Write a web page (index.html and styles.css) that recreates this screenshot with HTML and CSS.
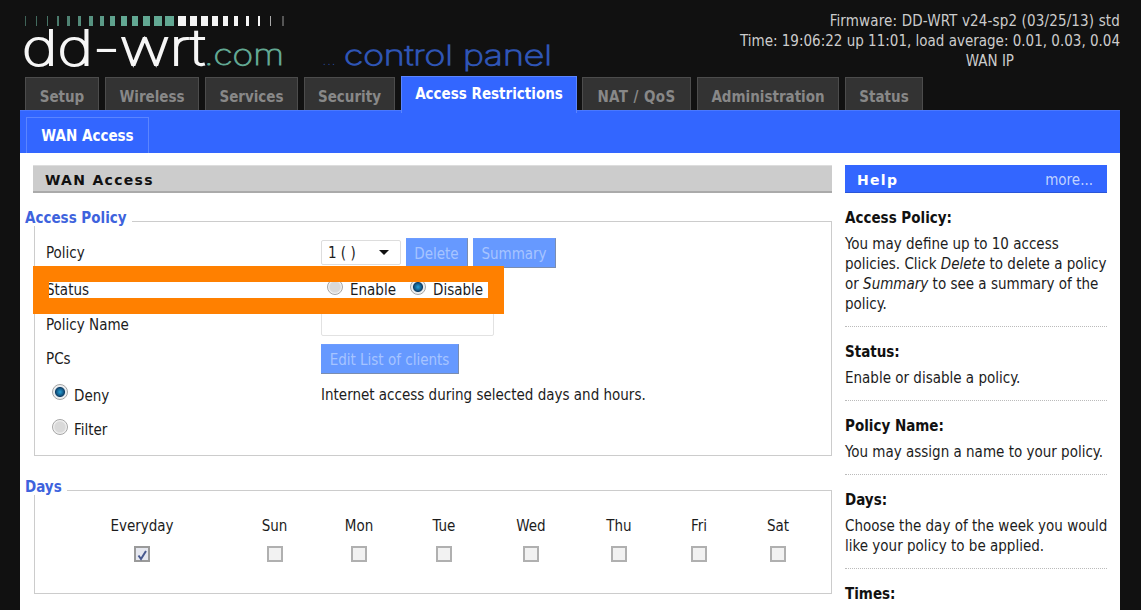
FILE: index.html
```html
<!DOCTYPE html>
<html lang="en">
<head>
<meta charset="utf-8">
<title>DD-WRT Access Restrictions</title>
<link rel="stylesheet" href="styles.css">
</head>
<body>
<div class="page">
  <header class="top">
    <svg class="logo" width="560" height="76" viewBox="0 0 560 76" aria-label="dd-wrt.com control panel">
      <defs>
        <linearGradient id="tealfade" gradientUnits="userSpaceOnUse" x1="0" y1="0" x2="100" y2="0">
          <stop offset="0" stop-color="#3d5f55"/>
          <stop offset="1" stop-color="#62a893"/>
        </linearGradient>
      </defs>
      <g class="bars-teal">
        <rect x="5" y="16" width="1" height="10"/><rect x="16" y="16" width="1" height="10"/><rect x="27" y="16" width="1" height="10"/>
        <rect x="37" y="16" width="2" height="10"/><rect x="47" y="16" width="3" height="10"/><rect x="58" y="16" width="3" height="10"/>
        <rect x="69" y="16" width="4" height="10"/><rect x="80" y="16" width="4" height="10"/><rect x="90" y="16" width="5" height="10"/>
        <rect x="101" y="16" width="6" height="10"/><rect x="112" y="16" width="6" height="10"/><rect x="123" y="16" width="7" height="10"/>
        <rect x="134" y="16" width="8" height="10"/><rect x="145" y="16" width="9" height="10"/>
      </g>
      <g class="bars-white">
        <rect x="158" y="16" width="8" height="10"/><rect x="170" y="16" width="7" height="10"/><rect x="181" y="16" width="7" height="10"/>
        <rect x="192" y="16" width="6" height="10"/><rect x="203" y="16" width="5" height="10"/><rect x="214" y="16" width="4" height="10"/>
        <rect x="226" y="16" width="3" height="10"/><rect x="238" y="16" width="2" height="10"/>
      </g>
      <rect class="bar-dim" x="250" y="16" width="1" height="10"/>
      <rect class="bar-faint" x="262" y="16" width="2" height="10"/>
      <text class="logo-main" x="2" y="65" textLength="183" lengthAdjust="spacingAndGlyphs">dd-wrt</text>
      <text class="logo-com" x="184" y="65" textLength="80" lengthAdjust="spacingAndGlyphs">.com</text>
      <text class="logo-dots" x="302" y="65" textLength="14" lengthAdjust="spacingAndGlyphs">...</text>
      <text class="logo-panel" x="324" y="65" textLength="208" lengthAdjust="spacingAndGlyphs">control panel</text>
    </svg>
    <div class="sysinfo">
      <div class="firmware">Firmware: DD-WRT v24-sp2 (03/25/13) std</div>
      <div>Time: 19:06:22 up 11:01, load average: 0.01, 0.03, 0.04</div>
      <div class="wan">WAN IP</div>
    </div>
  </header>

  <nav class="tabs">
    <a class="tab">Setup</a>
    <a class="tab">Wireless</a>
    <a class="tab">Services</a>
    <a class="tab">Security</a>
    <a class="tab tab-active">Access Restrictions</a>
    <a class="tab tab-wide">NAT / QoS</a>
    <a class="tab">Administration</a>
    <a class="tab">Status</a>
  </nav>

  <div class="subbar"><a class="subtab">WAN Access</a></div>

  <div class="content">
    <main class="main">
      <h2 class="title">WAN Access</h2>

      <section class="fs fs-policy">
        <div class="legend">Access Policy</div>
        <div class="row row-first">
          <span class="lbl lbl-plain">Policy</span>
          <span class="val">
            <span class="select">1 ( )</span>
            <button class="btn btn-delete">Delete</button>
            <button class="btn btn-summary">Summary</button>
          </span>
        </div>
        <div class="row">
          <span class="lbl">Status</span>
          <span class="val val-status">
            <span class="radio radio-status"></span><span class="opt-enable">Enable</span>
            <span class="radio radio-on radio-status"></span><span>Disable</span>
          </span>
        </div>
        <div class="row">
          <span class="lbl">Policy Name</span>
          <span class="val"><span class="textbox"></span></span>
        </div>
        <div class="row">
          <span class="lbl lbl-plain">PCs</span>
          <span class="val"><button class="btn btn-clients">Edit List of clients</button></span>
        </div>
        <div class="row">
          <span class="lbl lbl-radio"><span class="radio radio-on"></span>Deny</span>
          <span class="val val-text">Internet access during selected days and hours.</span>
        </div>
        <div class="row">
          <span class="lbl lbl-radio lbl-filter"><span class="radio"></span>Filter</span>
        </div>
      </section>

      <section class="fs fs-days">
        <div class="legend">Days</div>
        <div class="days">
          <span>Everyday</span><span>Sun</span><span>Mon</span><span>Tue</span><span>Wed</span><span>Thu</span><span>Fri</span><span>Sat</span>
          <span class="check check-on"><svg width="14" height="14" viewBox="0 0 14 14"><path d="M3.5 7.5 L6 11 L11 3" fill="none" stroke="#48598f" stroke-width="2"/></svg></span>
          <span class="check"></span><span class="check"></span><span class="check"></span><span class="check"></span><span class="check"></span><span class="check"></span><span class="check"></span>
        </div>
      </section>
    </main>

    <aside class="help">
      <div class="help-head"><span class="help-title">Help</span><span class="help-more">more...</span></div>
      <div class="help-item">
        <h3>Access Policy:</h3>
        <p>You may define up to 10 access policies. Click <em>Delete</em> to delete a policy or <em>Summary</em> to see a summary of the policy.</p>
      </div>
      <div class="help-item">
        <h3>Status:</h3>
        <p>Enable or disable a policy.</p>
      </div>
      <div class="help-item">
        <h3>Policy Name:</h3>
        <p>You may assign a name to your policy.</p>
      </div>
      <div class="help-item">
        <h3>Days:</h3>
        <p>Choose the day of the week you would like your policy to be applied.</p>
      </div>
      <div class="help-item">
        <h3>Times:</h3>
      </div>
    </aside>
  </div>

  <div class="annotation"></div>
</div>
</body>
</html>
```
FILE: styles.css
```css
* { box-sizing: border-box; }
html, body { margin: 0; height: 610px; overflow: hidden; background: #111; }
body { font-family: "DejaVu Sans Condensed", "DejaVu Sans", sans-serif; font-size: 15px; line-height: 20px; color: #1c1c1c; }
.page { position: relative; width: 1120px; padding-left: 20px; }

.top { display: flex; justify-content: space-between; height: 76px; }
.logo { display: block; }
.bars-teal { fill: url(#tealfade); }
.bars-white { fill: #f4f4f4; }
.bar-dim { fill: #aaa; }
.bar-faint { fill: #555; }
.logo-main, .logo-com, .logo-dots, .logo-panel { font-family: Inter, "DejaVu Sans", sans-serif; font-weight: 100; }
.logo-main { font-size: 48px; fill: #f6f6f6; stroke: #f6f6f6; stroke-width: 2px; }
.logo-com { font-size: 29px; fill: #62a893; stroke: #62a893; stroke-width: 1.1px; }
.logo-dots { font-size: 24px; fill: #2f55b5; }
.logo-panel { font-size: 27px; fill: #2f55b5; stroke: #2f55b5; stroke-width: 1.3px; }

.sysinfo { padding-top: 11px; text-align: right; color: #ccc; }
.firmware { letter-spacing: 0.15px; }
.wan { padding-right: 106px; }

.tabs { display: grid; grid-template-columns: 74px 94px 93px 91px 175px 109px 142px 78px; column-gap: 6px; height: 34px; padding-left: 5px; position: relative; z-index: 1; }
.tab { height: 33px; margin-top: 1px; padding-top: 9px; text-align: center; background: #333; border: 1px solid #4c4c4c; border-bottom: 0; color: #888; font-weight: 700; }
.tab-active { width: 176px; height: 37px; margin-top: 0; padding-top: 7px; background: #36f; border-color: #5b85ff; color: #fff; }
.tab-wide { letter-spacing: 0.4px; }

.subbar { height: 43px; padding: 6px 0 0 6px; background: #36f; border-top: 1px solid #4a78ff; }
.subtab { display: block; width: 123px; height: 37px; padding-top: 8px; text-align: center; border: 1px solid #5b85ff; border-bottom: 0; color: #fff; font-weight: 700; }

.content { display: flex; gap: 13px; height: 457px; padding: 12px 0 0 13px; background: #fff; }
.main { width: 799px; flex: none; }
.title { margin: 0; height: 28px; padding: 4px 0 0 12px; background: #ccc; border-bottom: 2px solid #aaa; border-top: 1px solid #ddd; color: #111; font-size: 14px; font-weight: 700; letter-spacing: 1.3px; font-family: "DejaVu Sans", sans-serif; }

.fs { margin-left: 1px; border: 1px solid #ccc; padding-left: 11px; }
.fs-policy { height: 235px; margin-top: 28px; }
.fs-days { height: 104px; margin-top: 34px; }
.legend { width: fit-content; height: 18px; margin: -14px 0 9px -21px; padding-right: 5px; background: #fff; color: #3e63dd; font-weight: 700; }

.row { display: flex; align-items: center; height: 35px; }
.row-first { height: 36px; }
.lbl { width: 275px; flex: none; padding-top: 2px; }
.lbl-plain { padding-top: 0; }
.lbl-radio { display: flex; align-items: center; padding: 4px 0 0 6px; }
.lbl-filter { padding-top: 2px; }
.lbl-radio .radio { margin-right: 6px; position: relative; top: -4px; }
.lbl-filter .radio { top: -3px; }
.val { display: flex; align-items: center; }
.val-text { padding-top: 2px; }
.val-status { padding: 2px 0 0 6px; }
.opt-enable { margin: 0 14px 0 7px; }
.val-status .radio-on { margin-right: 7px; }
.radio-status { position: relative; top: -3px; }

.radio { display: inline-block; flex: none; width: 16px; height: 16px; border-radius: 50%; border: 1px solid #a5a5a5; background: radial-gradient(circle at 50% 50%, #d9d9d9 0 50%, #f5f5f5 68%, #e6e6e6 100%); }
.radio-on { background: radial-gradient(circle at 50% 50%, #2ba3d8 0, #14608f 32%, #123f66 46%, #e8ecef 56%, #f4f4f4 80%, #d0d0d0 100%); }

.select { position: relative; display: block; width: 80px; height: 25px; margin-top: -1px; padding: 2px 0 0 6px; border: 1px solid #ddd; border-radius: 2px; background: #fff; color: #1c1c1c; }
.select::after { content: ""; position: absolute; right: 11px; top: 9px; border: 5px solid transparent; border-top: 5px solid #111; border-bottom: 0; }

.btn { display: block; height: 30px; padding: 2px 0 0; background: #69f; border: 0; border-top: 1px solid #6d9cff; border-right: 1px solid #7a8db0; border-bottom: 1px solid #7a8db0; color: #a6c4ff; font: inherit; }
.btn-delete { width: 62px; margin-left: 5px; }
.btn-summary { width: 83px; margin-left: 5px; }
.btn-clients { width: 138px; }

.textbox { display: block; width: 173px; height: 24px; border: 1px solid #e2e2e2; border-radius: 2px; background: #fff; }

.days { display: grid; grid-template-columns: 214px 51px 118px 52px 122px 54px 106px 52px; grid-template-rows: 20px 16px; row-gap: 10px; margin: 21px 0 0 -11px; justify-items: center; align-items: center; }
.check { display: block; width: 16px; height: 16px; border: 2px solid #b0b0b0; background: #f2f2f2; }
.check-on { border-color: #9a9a9a; background: #e6e8f0; }
.check svg { display: block; margin: 0; }
.check-on svg { margin: 0 0 0 -1px; }

.help { width: 262px; flex: none; }
.help-head { display: flex; justify-content: space-between; align-items: center; height: 28px; padding: 3px 14px 0 12px; background: #36f; border-bottom: 1px solid #2a55d8; color: #fff; }
.help-title { font-family: "DejaVu Sans", sans-serif; font-size: 14px; font-weight: 700; letter-spacing: 1.3px; }
.help-more { color: #c0d2ff; }
.help-item { padding: 15px 0 12px; border-bottom: 1px dotted #bbb; }
.help h3 { margin: 0; font-size: 15px; font-weight: 700; color: #111; }
.help p { margin: 6px -6px 0 0; color: #1c1c1c; }

.annotation { position: absolute; left: 33px; top: 266px; width: 471px; height: 48px; border: 16px solid #ff8000; }
```
